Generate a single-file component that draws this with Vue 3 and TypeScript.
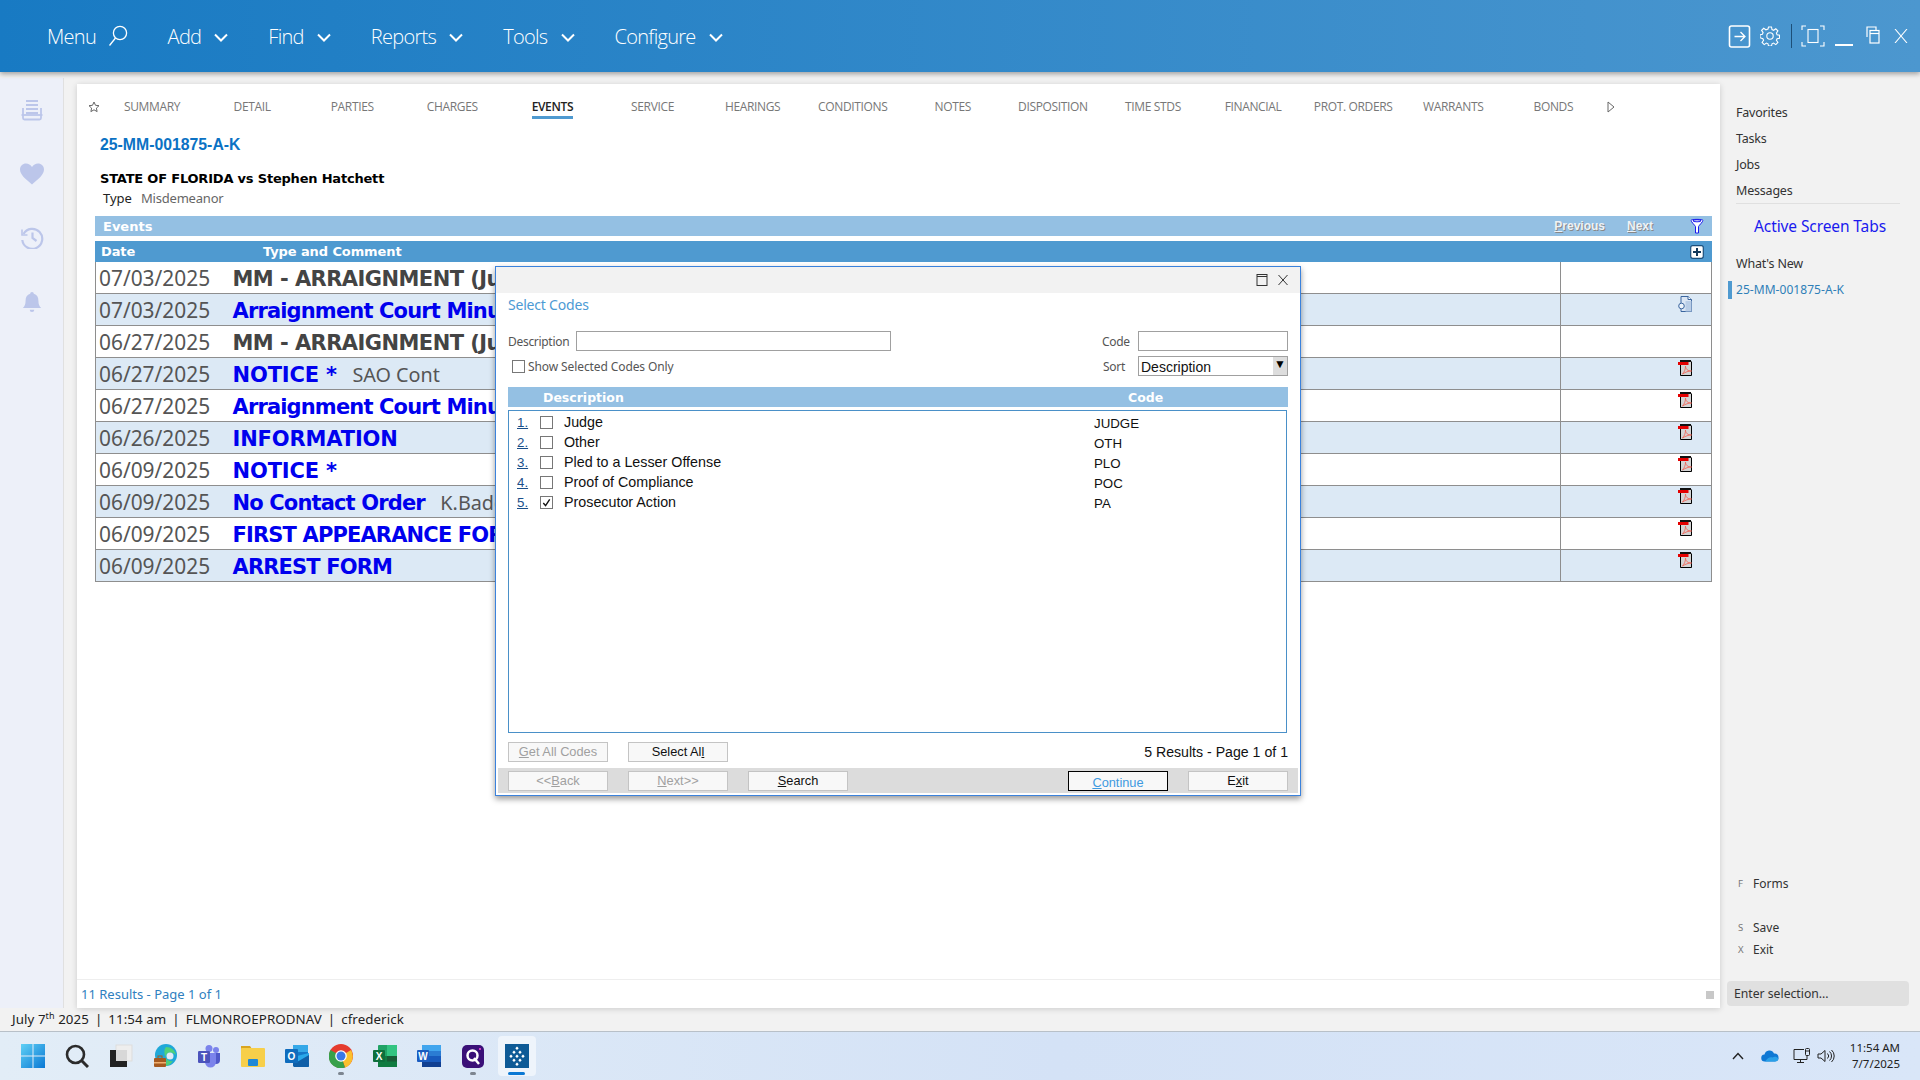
<script setup lang="ts">
interface EventRow { date: string; title: string; note?: string; dark?: boolean; fit?: 'tight' | 'wide'; icon?: 'pdf' | 'doc' }
const navItems: string[] = ['Add', 'Find', 'Reports', 'Tools', 'Configure']
const tabs: string[] = ['SUMMARY', 'DETAIL', 'PARTIES', 'CHARGES', 'EVENTS', 'SERVICE', 'HEARINGS', 'CONDITIONS', 'NOTES', 'DISPOSITION', 'TIME STDS', 'FINANCIAL', 'PROT. ORDERS', 'WARRANTS', 'BONDS']
const rows: EventRow[] = [
  { date: '07/03/2025', title: 'MM - ARRAIGNMENT (Judge', dark: true },
  { date: '07/03/2025', title: 'Arraignment Court Minutes', fit: 'tight', icon: 'doc' },
  { date: '06/27/2025', title: 'MM - ARRAIGNMENT (Judge', dark: true },
  { date: '06/27/2025', title: 'NOTICE *', note: 'SAO Cont', fit: 'wide', icon: 'pdf' },
  { date: '06/27/2025', title: 'Arraignment Court Minutes', fit: 'tight', icon: 'pdf' },
  { date: '06/26/2025', title: 'INFORMATION', fit: 'wide', icon: 'pdf' },
  { date: '06/09/2025', title: 'NOTICE *', fit: 'wide', icon: 'pdf' },
  { date: '06/09/2025', title: 'No Contact Order', note: 'K.Badger', fit: 'tight', icon: 'pdf' },
  { date: '06/09/2025', title: 'FIRST APPEARANCE FORM', fit: 'tight', icon: 'pdf' },
  { date: '06/09/2025', title: 'ARREST FORM', fit: 'tight', icon: 'pdf' }
]
const codes = [
  { desc: 'Judge', code: 'JUDGE', on: false },
  { desc: 'Other', code: 'OTH', on: false },
  { desc: 'Pled to a Lesser Offense', code: 'PLO', on: false },
  { desc: 'Proof of Compliance', code: 'POC', on: false },
  { desc: 'Prosecutor Action', code: 'PA', on: true }
]
</script>

<template>
  <div class="app">
    <header class="topbar">
      <nav class="nav">
        <div class="nav-item">
          <span>Menu</span>
          <svg class="nav-search" viewBox="0 0 20 22" fill="none" stroke="#fff" stroke-width="1.3"><circle cx="12" cy="8" r="6.6" /><path d="M7.5 13 1.5 20.5" /></svg>
        </div>
        <div v-for="n in navItems" :key="n" class="nav-item">
          <span>{{ n }}</span>
          <svg class="chev" viewBox="0 0 14 9" fill="none" stroke="#fff" stroke-width="2"><path d="M1 1.5 7 7.5 13 1.5" /></svg>
        </div>
      </nav>
      <div class="win-tools">
        <svg class="w-arrow" viewBox="0 0 22 23" fill="none" stroke="#fff"><rect x="1" y="1" width="20" height="21" rx="2" stroke-width="1.6" /><path d="M6 11.5h10M12 7l4.5 4.5L12 16" stroke-width="1.3" /></svg>
        <svg class="w-gear" viewBox="0 0 20 20" fill="none" stroke="#fff" stroke-width="1.1"><path d="M8.5 1h3l.5 2.6 1.6.7 2.2-1.5 2.1 2.1-1.5 2.2.7 1.6 2.4.5v3l-2.4.5-.7 1.6 1.5 2.2-2.1 2.1-2.2-1.5-1.6.7-.5 2.2h-3l-.5-2.2-1.6-.7-2.2 1.5-2.1-2.1 1.5-2.2-.7-1.6L0 11.7v-3l2.4-.5.7-1.6-1.5-2.2 2.1-2.1 2.2 1.5L8 3.1z" /><circle cx="10" cy="10" r="3.2" /></svg>
        <span class="w-div"></span>
        <svg class="w-focus" viewBox="0 0 24 22" fill="none" stroke="#fff" stroke-width="1.1"><path d="M1 5V1h4M19 1h4v4M23 17v4h-4M5 21H1v-4" /><rect x="7" y="4.500" width="10" height="13" /></svg>
        <span class="w-min"></span>
        <svg class="w-rest" viewBox="0 0 14 18" fill="none" stroke="#fff" stroke-width="1.2"><path d="M1 11V1h9v3" /><rect x="4" y="4.500" width="9" height="12.500" /><path d="M4 7.500h9" /></svg>
        <svg class="w-x" viewBox="0 0 14 14" fill="none" stroke="#fff" stroke-width="1.1"><path d="M1 0 13 14M13 0 1 14" /></svg>
      </div>
    </header>

    <div class="middle">
      <aside class="rail">
        <svg viewBox="0 0 24 22" fill="none" stroke="#bcc6ea" stroke-width="1.8"><path d="M6 2h12M6 6h12M6 10h12M6 14h12" /><path d="M3 9v10a1.500 1.500 0 0 0 1.500 1.500h15A1.500 1.500 0 0 0 21 19V9" /><path d="M1.500 16h21" /></svg>
        <svg viewBox="0 0 24 22" fill="#bcc6ea"><path d="M12 21.500C5 15.500 0 11.500 0 6.500 0 3 2.700.5 6 .5c2.400 0 4.600 1.300 6 3.500 1.400-2.200 3.600-3.500 6-3.500 3.300 0 6 2.500 6 6 0 5-5 9-12 15z" /></svg>
        <svg viewBox="0 0 24 22" fill="none" stroke="#bcc6ea" stroke-width="2.200"><path d="M3.500 7A10 10 0 1 1 2.300 13" /><path d="M2 2.500v5.500h5.500" stroke-width="1.600" /><path d="M12.500 5.500V11l4 3" /></svg>
        <svg viewBox="0 0 24 24" fill="#bcc6ea"><path d="M12 1a2 2 0 0 1 2 2c3.500 1 5 4 5 7.500 0 4 1 6 3 8H2c2-2 3-4 3-8C5 7 6.500 4 10 3a2 2 0 0 1 2-2z" /><path d="M9.500 20.500h5a2.500 2.500 0 0 1-5 0z" /></svg>
      </aside>

      <main class="card">
        <div class="tabs">
          <svg class="star" viewBox="0 0 12 12" fill="none" stroke="#666" stroke-width="1"><path d="M6 1l1.500 3.300 3.500.4-2.600 2.400.7 3.500L6 8.800l-3.100 1.800.7-3.500L1 4.700l3.500-.4z" /></svg>
          <div v-for="t in tabs" :key="t" class="tab" :class="{ active: t === 'EVENTS' }"><span>{{ t }}</span></div>
          <svg class="more" viewBox="0 0 8 12" fill="none" stroke="#666"><path d="M1 1l6 5-6 5z" /></svg>
        </div>

        <div class="case">
          <div class="case-no">25-MM-001875-A-K</div>
          <div class="case-title">STATE OF FLORIDA vs Stephen Hatchett</div>
          <div class="case-type"><span class="ty">Type</span><span class="mis">Misdemeanor</span></div>
        </div>

        <div class="events-bar">
          <span class="eb-title">Events</span>
          <div class="eb-right">
            <span class="pn pn-prev"><u>P</u>revious</span>
            <span class="pn"><u>N</u>ext</span>
            <svg class="funnel" viewBox="0 0 14 16" fill="#fff" stroke="#1a1aee" stroke-width="1"><path d="M1 2.500C1 1 13 1 13 2.500c0 1-4 5-4.500 6V15h-3V8.500C5 7.500 1 3.500 1 2.500z" /><ellipse cx="7" cy="2.800" rx="4" ry="1" fill="none" /></svg>
          </div>
        </div>

        <div class="ev-table">
          <div class="ev-head">
            <span class="h-date">Date</span>
            <span class="h-type">Type and Comment</span>
            <svg class="plus" viewBox="0 0 14 14"><rect x=".7" y=".7" width="12.600" height="12.600" rx="2" fill="#fff" stroke="#1c4f7c" stroke-width="1.200" /><path d="M7 3v8M3 7h8" stroke="#12395c" stroke-width="2" /></svg>
          </div>
          <div v-for="(r, i) in rows" :key="i" class="ev-row" :class="{ alt: i % 2 === 1 }">
            <div class="ev-main">
              <span class="ev-date">{{ r.date }}</span>
              <span class="ev-title" :class="[r.fit, { dark: r.dark }]">{{ r.title }}</span>
              <span v-if="r.note" class="ev-note">{{ r.note }}</span>
            </div>
            <div class="ev-act">
              <svg v-if="r.icon === 'pdf'" class="row-ic" viewBox="0 0 14 16">
                <path d="M2.500 .5h9.500l1.500 1.500v13.500H2.500z" fill="#d4d4d4" stroke="#000" />
                <rect x="2" y="0" width="11" height="2" fill="#111" />
                <rect x="0" y="2" width="10.500" height="3" fill="#e40000" />
                <path d="M4.500 14c2-2 3-5 3-8 0 3 2 5 6 5-3 0-6 1-9 3z" fill="none" stroke="#f06a5c" stroke-width=".9" />
              </svg>
              <svg v-if="r.icon === 'doc'" class="row-ic" viewBox="0 0 14 16">
                <path d="M3 .5h7l3.500 3v12H3z" fill="#dbe6f4" stroke="#3a659e" />
                <path d="M10 .5v3h3.500" fill="#fff" stroke="#3a659e" />
                <rect x="7.500" y="5" width="6" height="10.500" fill="#b9cde6" />
                <circle cx="3.500" cy="10" r="2.800" fill="#eef4fb" stroke="#3a659e" />
              </svg>
            </div>
          </div>
        </div>

        <footer class="card-foot">
          <span class="results">11 Results - Page 1 of 1</span>
          <span class="grip"></span>
        </footer>
      </main>

      <aside class="side">
        <div class="side-links">
          <div class="s-link">Favorites</div>
          <div class="s-link">Tasks</div>
          <div class="s-link">Jobs</div>
          <div class="s-link">Messages</div>
        </div>
        <div class="s-active">Active Screen Tabs</div>
        <div class="s-link s-new">What's New</div>
        <div class="s-cur">25-MM-001875-A-K</div>
        <div class="s-spacer"></div>
        <div class="s-key s-forms"><i>F</i><span>Forms</span></div>
        <div class="s-key s-save"><i>S</i><span>Save</span></div>
        <div class="s-key"><i>X</i><span>Exit</span></div>
        <div class="s-input">Enter selection...</div>
      </aside>
    </div>

    <div class="status">
      <span>July 7<sup>th</sup> 2025</span><b>|</b><span>11:54 am</span><b>|</b><span>FLMONROEPRODNAV</span><b>|</b><span>cfrederick</span>
    </div>

    <div class="taskbar">
      <div class="tb-icons">
        <div class="tb-slot">
          <svg viewBox="0 0 24 24"><defs><linearGradient id="wg" x1="0" y1="0" x2="1" y2="1"><stop offset="0" stop-color="#5fd0f5" /><stop offset="1" stop-color="#0a78d4" /></linearGradient></defs><path d="M0 0h11.500v11.500H0zM12.500 0H24v11.500H12.500zM0 12.500h11.500V24H0zM12.500 12.500H24V24H12.500z" fill="url(#wg)" /></svg>
        </div>
        <div class="tb-slot">
          <svg viewBox="0 0 24 24" fill="none" stroke="#2b2b2b"><circle cx="10.500" cy="10.500" r="8.500" stroke-width="2.600" /><path d="M16.500 16.500 23 23" stroke-width="3" /></svg>
        </div>
        <div class="tb-slot">
          <svg viewBox="0 0 24 24"><rect x="7" y="1" width="16" height="16" fill="#eee" stroke="#ddd" /><rect x="1" y="6" width="17" height="17" fill="#222" /><path d="M7 6h11v11H7z" fill="#d8d8d8" /></svg>
        </div>
        <div class="tb-slot">
          <svg viewBox="0 0 24 24"><circle cx="13" cy="11" r="11" fill="#1fa8d8" /><path d="M13 3c5 0 9 3 10 8-2-2-5-3-8-2-2 1-3 3-2 5 1 2 4 4 7 3-2 3-5 5-9 5 3-2 3-6 1-10-1-3-1-7 1-9z" fill="#4fd17a" /><circle cx="17" cy="12" r="3.500" fill="#e0ebf6" /><rect x="1" y="14" width="12" height="9" rx="1" fill="#a55a20" /><rect x="1" y="18" width="12" height="1.500" fill="#f0b070" /><rect x="5" y="12" width="4" height="2.500" fill="none" stroke="#a55a20" /></svg>
        </div>
        <div class="tb-slot">
          <svg viewBox="0 0 24 24"><circle cx="19" cy="6" r="3" fill="#7b83eb" /><circle cx="12" cy="4.500" r="3.500" fill="#7b83eb" /><path d="M15 9h8v7a4 4 0 0 1-8 0z" fill="#5059c9" /><path d="M8 9h11v9a5.500 5.500 0 0 1-11 0z" fill="#7b83eb" /><rect x="1" y="7" width="12" height="12" rx="1.200" fill="#4b53bc" /><text x="7" y="16.500" text-anchor="middle" class="ti">T</text></svg>
        </div>
        <div class="tb-slot">
          <svg viewBox="0 0 24 24"><path d="M0 2h9l2 3h-11z" fill="#d9a520" /><rect y="4" width="24" height="19" rx="1" fill="#f7cf4a" /><rect x="7" y="15" width="10" height="7" rx="1" fill="#1f88d6" /></svg>
        </div>
        <div class="tb-slot">
          <svg viewBox="0 0 24 24"><rect x="8" y="1" width="15" height="8" fill="#35a8e8" /><rect x="8" y="8" width="15" height="8" fill="#1478c8" /><path d="M12 12l12-3v13a1 1 0 0 1-1 1H9z" fill="#28a8ea" /><path d="M24 11 12 18 8 16v6l1 1h14a1 1 0 0 0 1-1z" fill="#0f5fa8" /><rect y="5" width="13" height="14" rx="1" fill="#0f6cbd" /><text x="6.500" y="16" text-anchor="middle" class="ti">O</text></svg>
        </div>
        <div class="tb-slot">
          <svg viewBox="0 0 24 24"><circle cx="12" cy="12" r="12" fill="#e53b2e" /><path d="M12 12 22 6a12 12 0 0 1-6 17.500z" fill="#fbc02d" /><path d="M12 12 16 23.500A12 12 0 0 1 1.500 6z" fill="#37a04a" /><circle cx="12" cy="12" r="5.800" fill="#fff" /><circle cx="12" cy="12" r="4.500" fill="#3b78e7" /></svg>
          <span class="tb-dot"></span>
        </div>
        <div class="tb-slot">
          <svg viewBox="0 0 24 24"><rect x="5" y="1" width="19" height="22" rx="1" fill="#21a366" /><rect x="14" y="1" width="10" height="11" fill="#33c481" /><rect x="5" y="12" width="19" height="11" fill="#107c41" /><rect x="14" y="12" width="10" height="5.500" fill="#185c37" /><rect y="6" width="12" height="12" rx="1" fill="#0e6f3c" /><text x="6" y="15.500" text-anchor="middle" class="ti">X</text></svg>
        </div>
        <div class="tb-slot">
          <svg viewBox="0 0 24 24"><rect x="5" y="1" width="19" height="22" rx="1" fill="#2b7cd3" /><rect x="5" y="1" width="19" height="6" fill="#41a5ee" /><rect x="5" y="12" width="19" height="6" fill="#185abd" /><rect x="5" y="18" width="19" height="5" fill="#103f91" /><rect y="6" width="12" height="12" rx="1" fill="#1b5cc0" /><text x="6" y="15.500" text-anchor="middle" class="ti">W</text></svg>
        </div>
        <div class="tb-slot">
          <svg viewBox="0 0 24 24"><rect x="1" y="1" width="22" height="23" rx="5" fill="#3a1078" /><circle cx="11.500" cy="11.500" r="5" fill="none" stroke="#fff" stroke-width="2.500" /><path d="M13 14l5 6" stroke="#fff" stroke-width="2.500" /><circle cx="19" cy="5" r="1" fill="#f4d" /></svg>
          <span class="tb-dot"></span>
        </div>
        <div class="tb-slot current">
          <svg viewBox="0 0 24 24"><rect width="24" height="24" fill="#0d5a96" /><g fill="#fff"><rect x="11" y="3" width="2.400" height="2.400" transform="rotate(45 12 4)" /><rect x="8" y="7" width="2.400" height="2.400" transform="rotate(45 9 8)" /><rect x="14" y="7" width="2.400" height="2.400" transform="rotate(45 15 8)" /><rect x="5" y="11" width="2.400" height="2.400" transform="rotate(45 6 12)" /><rect x="11" y="11" width="2.400" height="2.400" transform="rotate(45 12 12)" /><rect x="17" y="11" width="2.400" height="2.400" transform="rotate(45 18 12)" /><rect x="8" y="15" width="2.400" height="2.400" transform="rotate(45 9 16)" /><rect x="14" y="15" width="2.400" height="2.400" transform="rotate(45 15 16)" /><rect x="11" y="19" width="2.400" height="2.400" transform="rotate(45 12 20)" /></g></svg>
          <span class="tb-ind"></span>
        </div>
      </div>
      <div class="tray">
        <svg class="t-chev" viewBox="0 0 12 8" fill="none" stroke="#222" stroke-width="1.400"><path d="M1 7l5-5.500L11 7" /></svg>
        <svg class="t-cloud" viewBox="0 0 18 12"><path d="M4 11.500a3.500 3.500 0 0 1-.5-7A5 5 0 0 1 13 3.500a4 4 0 0 1 1 8z" fill="#0f78d4" /><path d="M4 11.500h10a3.500 3.500 0 0 0 3.500-3c-2-2-4-2-6-1-2-1-5 0-7.500 4z" fill="#2aa0e8" /></svg>
        <svg class="t-net" viewBox="0 0 18 16" fill="none" stroke="#222" stroke-width="1"><path d="M11 1.500H1v10h13V7M4 14.500h7M7.500 11.500v3" /><rect x="12.500" y=".5" width="4" height="7" rx="1" /><path d="M12.500 3h4" /></svg>
        <svg class="t-vol" viewBox="0 0 18 14" fill="none" stroke="#222" stroke-width="1"><path d="M1 5v4h3l4 3.500v-11L4 5z" /><path d="M10.500 4.500a3.500 3.500 0 0 1 0 5M12.500 2.500a6 6 0 0 1 0 9M14.500 1a8 8 0 0 1 0 12" /></svg>
        <div class="t-clock"><div>11:54 AM</div><div>7/7/2025</div></div>
      </div>
    </div>

    <section class="dialog">
      <div class="dlg-title">
        <svg viewBox="0 0 12 12" fill="none" stroke="#333"><rect x="1" y=".5" width="10" height="11" /><path d="M1 2.500h10" /></svg>
        <svg viewBox="0 0 12 12" fill="none" stroke="#333"><path d="M1.500 1l9 10M10.500 1l-9 10" /></svg>
      </div>
      <div class="dlg-body">
        <div class="dlg-head">Select Codes</div>
        <div class="f-row f-row1">
          <div class="f-left"><label>Description</label><span class="input desc"></span></div>
          <div class="f-right"><label>Code</label><span class="input code"></span></div>
        </div>
        <div class="f-row f-row2">
          <div class="f-left"><span class="cbx"></span><label class="only">Show Selected Codes Only</label></div>
          <div class="f-right"><label class="sort">Sort</label><div class="select"><span>Description</span><i>▼</i></div></div>
        </div>
        <div class="list-head"><span>Description</span><span>Code</span></div>
        <div class="list">
          <div v-for="(c, i) in codes" :key="c.code" class="list-row">
            <span class="li-num">{{ i + 1 }}.</span>
            <span class="li-cb">
              <svg v-if="c.on" viewBox="0 0 12 12" fill="none" stroke="#111" stroke-width="1.500"><path d="M2.500 6.500 5 9.500 9.500 2.500" /></svg>
            </span>
            <span class="li-desc">{{ c.desc }}</span>
            <span class="li-code">{{ c.code }}</span>
          </div>
        </div>
        <div class="btn-row">
          <button class="btn dis"><u>G</u>et All Codes</button>
          <button class="btn">Select Al<u>l</u></button>
          <span class="dlg-res">5 Results - Page 1 of 1</span>
        </div>
      </div>
      <div class="dlg-foot">
        <button class="btn dis">&lt;&lt;<u>B</u>ack</button>
        <button class="btn dis"><u>N</u>ext&gt;&gt;</button>
        <button class="btn"><u>S</u>earch</button>
        <span class="foot-gap"></span>
        <button class="btn primary"><u>C</u>ontinue</button>
        <button class="btn">E<u>x</u>it</button>
      </div>
    </section>
  </div>
</template>

<style>
html, body { margin: 0; padding: 0; background: #f2f2f2; overflow: hidden; }
</style>

<style scoped>
.app { position: relative; width: 1920px; height: 1080px; display: flex; flex-direction: column; overflow: hidden; background: #f2f2f2; font-family: "Noto Sans", sans-serif; color: #222; }

.topbar { height: 72px; flex: none; display: flex; align-items: center; justify-content: space-between; background: linear-gradient(90deg, #187ac3, #4c97cf); box-shadow: 0 2px 5px rgba(0,0,0,.35); position: relative; z-index: 2; }
.nav { display: flex; align-items: center; gap: 40px; padding-left: 47px; }
.nav-item { display: flex; align-items: center; gap: 13px; color: #fff; font: 300 20px "Open Sans", sans-serif; letter-spacing: -.7px; }
.nav-search { width: 20px; height: 22px; margin: 0 -.5px 0 -1px; }
.chev { width: 14px; height: 9px; margin-top: 3px; }
.win-tools { display: flex; align-items: center; padding-right: 12px; }
.w-arrow { width: 23px; height: 23px; }
.w-gear { width: 20px; height: 20px; margin-left: 9px; }
.w-div { width: 1px; height: 24px; background: #1d4f78; margin-left: 11px; }
.w-focus { width: 24px; height: 22px; margin-left: 9px; }
.w-min { width: 18px; height: 2px; background: #fff; margin: 18px 0 0 10px; }
.w-rest { width: 14px; height: 18px; margin: -3px 0 0 13px; }
.w-x { width: 14px; height: 14px; margin-left: 14px; }

.middle { flex: 1; min-height: 0; display: flex; }
.rail { width: 64px; flex: none; margin-top: 6px; padding-top: 21px; box-sizing: border-box; display: flex; flex-direction: column; align-items: center; gap: 42px; background: #edf0f9; border-right: 1px solid #e0e0e0; }
.rail svg { width: 24px; height: 22px; }

.card { width: 1643px; flex: none; margin: 12px 0 0 13px; background: #fff; display: flex; flex-direction: column; box-shadow: 0 1px 6px rgba(0,0,0,.16); box-sizing: border-box; padding-left: 18px; padding-right: 8px; }
.tabs { display: flex; align-items: center; height: 24px; margin: 11px 0 0 -8px; position: relative; }
.star { width: 12px; height: 12px; flex: none; margin-left: 1px; margin-right: 2px; }
.tab { width: 100.100px; flex: none; text-align: center; font: 400 12px/24px "Open Sans", sans-serif; color: #777; letter-spacing: -.35px; }
.tab span { display: inline-block; height: 24px; box-sizing: border-box; }
.tab.active span { color: #222; font-weight: 600; border-bottom: 3px solid #4f9ad0; }
.more { width: 8px; height: 12px; margin-left: 4px; flex: none; }

.case { padding-left: 5px; }
.case-no { margin-top: 15px; height: 20px; font: 700 15.800px/21px "Liberation Sans", sans-serif; color: #0b72c4; }
.case-title { margin-top: 16px; height: 18px; font: 700 13px/18px "DejaVu Sans", sans-serif; color: #000; letter-spacing: -.2px; }
.case-type { margin-top: 1px; height: 18px; padding-left: 3px; font: 400 13px/18px "Noto Sans", sans-serif; display: flex; gap: 9px; }
.ty { color: #222; }
.mis { color: #666; letter-spacing: -.2px; }

.events-bar { margin-top: 9px; height: 20px; background: #94c0e3; color: #fff; display: flex; align-items: center; justify-content: space-between; padding: 0 8px; }
.eb-title { font: 700 13px "DejaVu Sans", sans-serif; }
.eb-right { display: flex; align-items: center; }
.pn { font: 700 12px "Liberation Sans", sans-serif; color: #eef2f6; text-shadow: 1px 1px 0 #888; margin-right: 20px; }
.pn-prev { margin-right: 22px; }
.funnel { width: 14px; height: 16px; margin-left: 17px; }

.ev-table { margin-top: 5px; }
.ev-head { height: 21px; box-sizing: border-box; background: #4f9ad0; color: #fff; font: 700 13px/23px "DejaVu Sans", sans-serif; display: flex; align-items: center; padding-left: 6px; position: relative; letter-spacing: -.1px; }
.h-date { width: 162px; }
.plus { position: absolute; right: 8px; top: 4px; width: 14px; height: 14px; }
.ev-row { height: 32px; box-sizing: border-box; display: flex; border: 1px solid #8e8e8e; border-top: 0; background: #fff; }
.ev-row:first-of-type { border-top: 1px solid #8e8e8e; }
.ev-row.alt { background: #dce9f5; }
.ev-main { flex: 1; min-width: 0; padding: 1px 0 0 3px; box-sizing: border-box; display: flex; align-items: center; white-space: nowrap; overflow: hidden; }
.ev-date { width: 133.500px; flex: none; font: 400 20.900px "Noto Sans", sans-serif; color: #555; }
.ev-title { font: 700 21px "DejaVu Sans", sans-serif; color: #0000ee; letter-spacing: -.55px; padding-top: 1px; }
.ev-title.dark { color: #444; }
.ev-title.tight { letter-spacing: -.85px; }
.ev-title.wide { letter-spacing: -.15px; }
.ev-note { margin-left: 15.500px; font: 400 19.800px "Noto Sans", sans-serif; color: #555; }
.ev-act { width: 151px; flex: none; box-sizing: border-box; border-left: 1px solid #8e8e8e; position: relative; }
.row-ic { position: absolute; left: 117px; top: 2px; width: 14px; height: 16px; }

.card-foot { margin-top: auto; margin-left: -18px; margin-right: -8px; height: 29px; box-sizing: border-box; border-top: 1px solid #eeeeee; display: flex; align-items: center; justify-content: space-between; padding: 0 6px 0 4px; }
.results { font: 400 13px "Noto Sans", sans-serif; color: #2f80c0; }
.grip { width: 8px; height: 8px; background: #c8c8c8; margin-top: 2px; }

.side { flex: 1; min-width: 0; padding: 28px 0 0 16px; display: flex; flex-direction: column; box-sizing: border-box; position: relative; }
.s-link { font: 400 12.500px/26px "Noto Sans", sans-serif; color: #333; height: 26px; letter-spacing: -.2px; }
.side-links { border-bottom: 1px solid #e0e0e0; width: 164px; padding-bottom: 0; height: 104px; box-sizing: border-box; }
.s-active { margin: 12px 0 0 18px; font: 400 15.500px/20px "Noto Sans", sans-serif; color: #1a1aee; letter-spacing: -.1px; }
.s-new { margin-top: 15px; }
.s-cur { margin: 4px 0 0 -8px; border-left: 4px solid #4f9ad0; padding-left: 4px; height: 18px; font: 400 12px/18px "Noto Sans", sans-serif; color: #2f7fb8; letter-spacing: .05px; }
.s-spacer { flex: 1; }
.s-key { display: flex; align-items: center; font: 400 12px/22px "Noto Sans", sans-serif; color: #333; height: 22px; }
.s-key i { font-style: normal; width: 17px; padding-left: 2px; box-sizing: border-box; font-size: 9.500px; color: #777; }
.s-forms { margin-bottom: 22px; }
.s-input { margin: 20px 11px 2px -9px; height: 25px; border-radius: 4px; background: #e0e0e0; padding-left: 7px; font: 400 12.200px/25px "Noto Sans", sans-serif; color: #333; }

.status { height: 24px; flex: none; box-sizing: border-box; display: flex; align-items: center; gap: 6px; padding: 0 0 2px 12px; font: 400 13.300px "Noto Sans", sans-serif; color: #222; border-bottom: 1px solid #b8c0c8; letter-spacing: .08px; }
.status b { font-weight: 400; }
.status sup { font-size: 9px; line-height: 0; }

.taskbar { height: 48px; flex: none; display: flex; align-items: center; justify-content: space-between; background: linear-gradient(90deg, #e2edf7, #d4e2f6 55%, #d9e6f8); }
.tb-icons { display: flex; padding-left: 11px; }
.tb-slot { width: 44px; height: 40px; display: flex; align-items: center; justify-content: center; position: relative; }
.tb-slot svg { width: 24px; height: 24px; }
.tb-slot.current { width: 38px; margin-left: 3px; background: #eef4fb; border-radius: 4px; }
.tb-ind { position: absolute; left: 10px; bottom: 1px; width: 17px; height: 3px; border-radius: 2px; background: #0a78d4; }
.tb-dot { position: absolute; left: 19px; bottom: 1px; width: 6px; height: 3px; border-radius: 2px; background: #7d8590; }
.ti { font: 700 10px "Liberation Sans", sans-serif; fill: #fff; }
.tray { display: flex; align-items: center; padding-right: 20px; }
.t-chev { width: 12px; height: 8px; }
.t-cloud { width: 18px; height: 12px; margin-left: 17px; }
.t-net { width: 18px; height: 16px; margin-left: 14px; }
.t-vol { width: 18px; height: 14px; margin-left: 6px; }
.t-clock { margin-left: 15px; text-align: right; font: 400 11.500px/16px "Noto Sans", sans-serif; color: #222; }

.dialog { position: absolute; left: 495px; top: 266px; width: 806px; height: 530px; box-sizing: border-box; background: #fff; border: 1px solid #3b82dc; box-shadow: 0 3px 6px rgba(0,0,0,.4); display: flex; flex-direction: column; z-index: 3; }
.dlg-title { height: 26px; flex: none; background: #f2f2f2; display: flex; justify-content: flex-end; align-items: center; gap: 9px; padding-right: 11px; }
.dlg-title svg { width: 12px; height: 12px; }
.dlg-body { flex: 1; padding: 0 12px; display: flex; flex-direction: column; }
.dlg-head { height: 20px; margin-top: 2px; font: 400 14px/20px "Noto Sans", sans-serif; color: #4c9ad4; letter-spacing: -.2px; }
.f-row { display: flex; justify-content: space-between; align-items: center; height: 20px; }
.f-row1 { margin-top: 16px; }
.f-row2 { margin-top: 5px; }
.f-left, .f-right { display: flex; align-items: center; }
label { font: 400 12px "Noto Sans", sans-serif; color: #555; letter-spacing: -.3px; padding-top: 1px; }
.f-left label { width: 68px; }
.f-left label.only { width: auto; margin-left: 3px; letter-spacing: -.1px; }
.f-right label { width: 36px; }
.f-right label.sort { box-sizing: border-box; padding-left: 1px; }
.input { display: block; height: 20px; box-sizing: border-box; border: 1px solid #a0a0a0; background: #fff; }
.input.desc { width: 315px; }
.input.code { width: 150px; }
.cbx { width: 13px; height: 13px; box-sizing: border-box; border: 1px solid #777; margin-left: 4px; }
.select { width: 150px; height: 20px; box-sizing: border-box; border: 1px solid #a0a0a0; display: flex; justify-content: space-between; font: 400 14px/20px "Liberation Sans", sans-serif; color: #111; padding-left: 2px; }
.select i { width: 14px; background: #ddd; font-style: normal; font-size: 12px; color: #000; text-align: center; line-height: 14px; }
.list-head { margin-top: 11px; height: 20px; flex: none; background: #94c0e3; color: #fff; font: 700 12.500px/21px "DejaVu Sans", sans-serif; display: flex; padding-left: 35px; }
.list-head span:first-child { width: 585px; }
.list { margin-top: 3px; height: 323px; flex: none; width: 779px; box-sizing: border-box; border: 1px solid #4a90c8; padding-top: 1px; }
.list-row { height: 20px; display: flex; align-items: center; font: 400 13.300px "Liberation Sans", sans-serif; color: #111; }
.li-num { padding-left: 8px; width: 14px; color: #1a4f8a; text-decoration: underline; margin-right: 9px; }
.li-cb { width: 13px; height: 13px; box-sizing: border-box; border: 1px solid #777; flex: none; display: block; }
.li-cb svg { display: block; width: 11px; height: 11px; }
.li-desc { margin-left: 11px; width: 530px; font-size: 14.300px; }
.li-code { padding-top: 2px; }
.btn-row { margin-top: 9px; display: flex; align-items: center; gap: 20px; }
.btn { width: 100px; height: 20px; box-sizing: border-box; background: #f8f8f8; border: 1px solid #c4c4c4; padding: 0; font: 400 12.800px/18px "Liberation Sans", sans-serif; color: #111; flex: none; }
.btn.dis { color: #a0a0a0; }
.btn.primary { border: 1px solid #000; color: #3f9ae0; padding-top: 2px; }
.dlg-res { margin-left: auto; font: 400 14.150px "Liberation Sans", sans-serif; color: #111; }
.dlg-foot { margin: 0 2px 2px; height: 25px; flex: none; background: #dcdcdc; display: flex; align-items: center; gap: 20px; padding: 0 10px; }
.foot-gap { flex: 1; }
</style>
